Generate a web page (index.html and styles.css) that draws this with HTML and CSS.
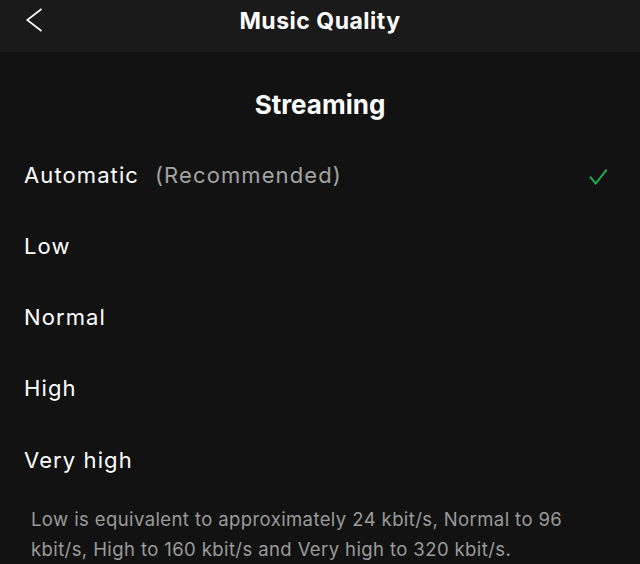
FILE: index.html
```html
<!DOCTYPE html>
<html>
<head>
<meta charset="utf-8">
<link rel="stylesheet" href="styles.css">
</head>
<body>
<header class="topbar">
  <button class="back" aria-label="Back">
    <svg width="20" height="26" viewBox="0 0 20 26"><path d="M17.5 1 L3.2 12 L17.5 23" fill="none" stroke="#fff" stroke-width="1.6"/></svg>
  </button>
  <h1 class="title">Music Quality</h1>
  <span class="spacer"></span>
</header>
<main class="content">
  <h2 class="section">Streaming</h2>
  <ul class="options">
    <li class="option selected"><span>Automatic<span class="muted">(Recommended)</span></span>
      <svg class="check" width="20" height="20" viewBox="0 0 20 20"><path d="M1 10.6 L6.7 17.6 L17.7 3.6" fill="none" stroke="#1db954" stroke-width="1.8"/></svg>
    </li>
    <li class="option">Low</li>
    <li class="option">Normal</li>
    <li class="option">High</li>
    <li class="option">Very high</li>
  </ul>
  <p class="note">Low is equivalent to approximately 24 kbit/s, Normal to 96 kbit/s, High to 160 kbit/s and Very high to 320 kbit/s.</p>
</main>
</body>
</html>
```
FILE: styles.css
```css
* { box-sizing: border-box; }
html, body { margin: 0; padding: 0; background: #121212; height: 100%; }
body { font-family: Inter, "Noto Sans", sans-serif; color: #fff; overflow: hidden; }
.topbar { height: 52px; background: #1a1a1a; display: grid; grid-template-columns: 64px 1fr 64px; align-items: start; }
.back { background: none; border: 0; padding: 0; margin: 8px 0 0 24px; width: 20px; height: 26px; display: block; }
.back svg { display: block; }
.title { margin: 0; padding-top: 5.6px; text-align: center; font-size: 23px; line-height: 30px; font-weight: 700; letter-spacing: 0.5px; }
.section { margin: 36.5px 0 0; text-align: center; font-size: 26px; line-height: 32px; font-weight: 700; }
.options { list-style: none; margin: 18.5px 0 0; padding: 0 0 0 24px; }
.option { display: flex; align-items: center; justify-content: space-between; height: 71.25px; font-size: 22px; letter-spacing: 1.1px; padding-right: 31px; }
.muted { color: #a3a3a3; margin-left: 16px; }
.check { flex: none; display: block; margin-top: 2px; }
.note { margin: 9px 0 0; padding: 0 31px; color: #9b9b9b; font-size: 18.5px; line-height: 30px; letter-spacing: 0.4px; }
```
